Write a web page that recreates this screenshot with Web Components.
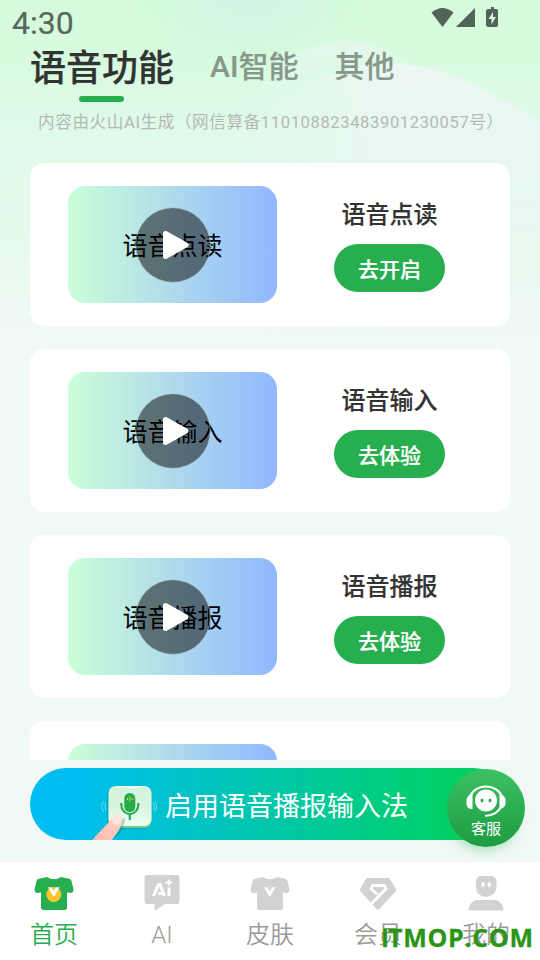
<!DOCTYPE html>
<html lang="zh-CN">
<head>
<meta charset="utf-8">
<title>语音功能</title>
<style>
html,body{margin:0;padding:0}
body{width:540px;height:960px;overflow:hidden;font-family:Roboto,"Noto Sans CJK SC",sans-serif}
</style>
</head>
<body>
<voice-app></voice-app>
<script>
const define = (name, html) => {
  const tpl = document.createElement('template');
  tpl.innerHTML = html;
  customElements.define(name, class extends HTMLElement {
    constructor() {
      super();
      this.attachShadow({mode: 'open'}).appendChild(tpl.content.cloneNode(true));
    }
  });
};

define('page-backdrop', `
<style>:host{display:block;position:absolute;inset:0}svg{display:block}</style>
<svg width="540" height="960" viewBox="0 0 540 960">
  <defs>
    <linearGradient id="b" x1="0" y1="0" x2="0" y2="1"><stop offset="0" stop-color="#d4fbda"/><stop offset=".06" stop-color="#d7fbdf"/><stop offset=".15" stop-color="#e1faeb"/><stop offset=".24" stop-color="#e5f9eb"/><stop offset=".34" stop-color="#f0f9f5"/><stop offset="1" stop-color="#f0f9f5"/></linearGradient>
    <linearGradient id="w" x1="0" y1="0" x2="0" y2="1"><stop offset="0" stop-color="#f0f6f5" stop-opacity=".8"/><stop offset=".4" stop-color="#e8f6f3" stop-opacity=".8"/><stop offset="1" stop-color="#eef8f5" stop-opacity="0"/></linearGradient>
    <linearGradient id="m" x1="0" y1="0" x2="0" y2="1"><stop offset="0" stop-color="#e6f7ef" stop-opacity=".8"/><stop offset="1" stop-color="#def9ec" stop-opacity="0"/></linearGradient>
    <radialGradient id="t" cx="250" cy="-5" r="150" gradientUnits="userSpaceOnUse" gradientTransform="translate(0 0) scale(1 .6)"><stop offset="0" stop-color="#d1f3e6"/><stop offset="1" stop-color="#d4fbdf" stop-opacity="0"/></radialGradient>
    <linearGradient id="f" x1="0" y1="0" x2="1" y2="0"><stop offset="0" stop-color="#fff" stop-opacity="0"/><stop offset=".55" stop-color="#fff"/></linearGradient>
    <mask id="k"><rect x="220" y="50" width="320" height="290" fill="url(#f)"/></mask>
  </defs>
  <rect width="540" height="960" fill="url(#b)"/>
  <rect width="540" height="130" fill="url(#t)"/>
  <path d="M232 120C270 70 300 41 345 41C375 41 395 54 412 66L440 130Z" fill="url(#m)"/>
  <path d="M220 160C290 80 350 58 412 65C460 70 500 98 540 122V340H220Z" fill="url(#w)" mask="url(#k)"/>
</svg>`);

define('status-bar', `
<style>:host{display:flex;justify-content:space-between;height:45px;padding:0 40px 0 12px;color:#58675c}
span{font-size:32px;line-height:47px;-webkit-text-stroke:.2px #58675c}svg{display:block}</style>
<span>4:30</span>
<svg width="70" height="30" viewBox="0 0 70 30" fill="#52645a"><path d="M1.500 12.500Q12.500 3.500 23.500 12.500L12.500 27Z"/><path d="M45 8V27H26Z"/><path d="M59 7H62V9H64.500Q66 9 66 11V25Q66 27 64 27H56.500Q54 27 54 25V11Q54 9 56.500 9H59Z" transform="translate(2 0)"/><path d="M63 12L58.500 19H61.500V24.500L66 17H63Z" fill="#d6fadd"/></svg>`);

define('tab-item', `
<style>:host{display:flex;flex-direction:column;align-items:center;font-size:30px;font-weight:500;color:#87988b;-webkit-text-stroke:.15px currentColor;line-height:43px}
:host([active]){font-size:36px;line-height:49px;color:#313332;-webkit-text-stroke-width:.25px}
i{display:none;width:45px;height:6px;border-radius:3px;background:#27ae4f;margin:2px 2px 0 0}
:host([active]) i{display:block}</style><slot></slot><i></i>`);

define('tab-bar', `
<style>:host{display:flex;align-items:flex-start;gap:36px;height:59px;padding-left:30px}</style><slot></slot>`);

define('notice-line', `
<style>:host{display:block;height:59px;padding-left:38px;font-size:16.6px;letter-spacing:.6px;line-height:38px;color:#b5b9b6;white-space:nowrap}</style><slot></slot>`);

define('play-thumb', `
<style>:host{display:grid;place-items:center;width:209px;height:117px;border-radius:17px;background:linear-gradient(90deg,#caffd9 0,#b9e6e5 34%,#a5cff2 66%,#91b7ff 100%);font-size:25px;color:#000}
span,svg{grid-area:1/1}span{margin-bottom:2px}svg{margin-top:1px}</style>
<span><slot></slot></span>
<svg width="76" height="76" viewBox="0 0 76 76"><circle cx="38" cy="38" r="37.300" fill="#000" fill-opacity=".5" stroke="#b8cdd2" stroke-width=".6"/><path d="M30.500 26.500L51 38L30.500 49.500Z" fill="#fff" stroke="#fff" stroke-width="5" stroke-linejoin="round"/></svg>`);

define('pill-button', `
<style>:host{display:flex;align-items:center;justify-content:center;box-sizing:border-box;width:111px;height:48px;padding-bottom:1px;border-radius:24px;background:#27ae4f;color:#fff;font-size:21px;font-weight:500;-webkit-text-stroke:.2px #fff}</style><slot></slot>`);

define('feature-card', `
<style>:host{display:flex;box-sizing:border-box;flex:none;height:163px;padding:23px 65px 23px 38px;border-radius:14px;background:#fff;justify-content:space-between}
.side{display:flex;flex-direction:column;align-items:center;padding-top:10px}
.title{font-size:24px;line-height:38px;height:48px;font-weight:500;-webkit-text-stroke:.15px #333;color:#333}</style>
<play-thumb><slot name="thumb"></slot></play-thumb>
<div class="side"><div class="title"><slot name="title"></slot></div><pill-button><slot name="action"></slot></pill-button></div>`);

define('feature-list', `
<style>:host{display:flex;flex-direction:column;gap:23px;height:597px;padding:0 30px;overflow:hidden}</style><slot></slot>`);

define('mic-art', `
<style>:host{display:block}svg{display:block}</style>
<svg width="64" height="72" viewBox="0 0 64 72">
  <defs><linearGradient id="k" x1="0" y1="0" x2="0" y2="1"><stop offset="0" stop-color="#d3f4de"/><stop offset=".5" stop-color="#d5f5de"/><stop offset="1" stop-color="#f1fff4"/></linearGradient>
  <linearGradient id="s" x1="0" y1="1" x2="1" y2="0"><stop offset="0" stop-color="#ffb9ac"/><stop offset="1" stop-color="#ffd8ce"/></linearGradient></defs>
  <rect x="14" y="20" width="44" height="41" rx="8" fill="#047e91" opacity=".45"/>
  <rect x="15.500" y="20" width="43" height="40" rx="7" fill="#71cf93"/>
  <rect x="15.500" y="18" width="43" height="40" rx="7" fill="url(#k)"/>
  <path d="M22 18.300H51Q40 22 36 20Q31 20 22 18.300Z" fill="#fff" opacity=".75"/>
  <g transform="translate(.3 0)"><rect x="31" y="25" width="11" height="19" rx="5.500" fill="#28aa4d"/>
  <path d="M28 35V37A8.500 9 0 0 0 45 37V35M36.500 46V52" fill="none" stroke="#28a94b" stroke-width="2.100"/>
  <path d="M34.200 30V32M36.500 28.500V33.500M38.800 30V32" stroke="#c7df3e" stroke-width="1"/></g>
  <path d="M22 70Q31 63 32 52L31 49L23 62Z" fill="#22734f" opacity=".3"/>
  <path d="M-1 72L15 55C20 48 23 45 27 47C30 49 29 52 28 57C26 64 21 68 19 72Z" fill="url(#s)"/>
  <path d="M19 51Q23 45 27 47Q30 49 28 54Q26 58 21 56Z" fill="#ffe5df"/>
  <g fill="none" stroke="#9be4f0" stroke-width=".8" opacity=".9"><path d="M10.500 33Q7 38.500 10.500 44M13 34.500Q11 38.500 13 42.500M62 33Q65.500 38.500 62 44M60.500 34.500Q62 38.500 60.500 42.500"/></g>
</svg>`);

define('cta-bar', `
<style>:host{display:flex;height:72px;margin:8px 30px 22px;box-sizing:border-box;padding-left:63px;gap:8px;border-radius:36px;background:linear-gradient(90deg,#00bdf1 0,#00bdf1 9%,#00d064 89%);color:#fff;font-size:27px;line-height:78px;font-weight:400;overflow:hidden}</style>
<mic-art></mic-art><slot></slot>`);

define('service-button', `
<style>:host{position:absolute;left:447px;top:769px;width:78px;height:78px;border-radius:50%;background:linear-gradient(#3bc164,#1d9c40);box-shadow:-2px 8px 10px -3px rgba(60,180,100,.3);display:flex;flex-direction:column;align-items:center;color:#fff;font-size:15px;line-height:18px}
svg{display:block;margin-top:13px;margin-bottom:1px}</style>
<svg width="42" height="37" viewBox="0 0 42 37" fill="#fff">
<path d="M5 15A16.500 14 0 0 1 37 15" fill="none" stroke="#fff" stroke-width="2"/>
<path d="M7.500 11.500V27Q2.500 27.500 1.500 22.500V17Q3 12.500 7.500 11.500ZM34.500 11.500V27Q39.500 26.500 40.500 22V17Q39 12.500 34.500 11.500Z"/>
<circle cx="21" cy="18.500" r="11"/><path d="M36.500 24C34 29 29 33.500 21 33.700" fill="none" stroke="#fff" stroke-width="2" stroke-linecap="round"/>
<ellipse cx="17" cy="18.500" rx="1.400" ry="2" fill="#22ab4c"/><ellipse cx="25" cy="18.500" rx="1.400" ry="2" fill="#22ab4c"/></svg><slot></slot>`);

define('nav-item', `
<style>:host{display:flex;flex-direction:column;align-items:center;flex:1;color:#999b9a;font-size:24px;line-height:36px;font-weight:350;padding-top:12px}
:host([active]){color:#27ae4f}</style><slot name="icon"></slot><span><slot></slot></span>`);

define('bottom-nav', `
<style>:host{display:flex;height:98px;background:#fff}svg{display:block;margin-bottom:5px}</style>
<nav-item active><svg slot="icon" width="40" height="38" viewBox="0 0 40 38"><path d="M13 3Q20 7.500 27 3L36 5Q37 5.500 37.500 7L39.500 15.500Q39.500 18.500 37 19L33 18.500V33.500Q33 36 30.500 36H10Q7 36 7 33.500V18.500L3 19Q.5 18.500.5 15.500L2.500 7Q3 5.500 4 5Z" fill="#27ae4f"/><circle cx="19.800" cy="20.500" r="7.500" fill="#fec62d"/><path d="M14 13.200H17.500L19.800 17L22 13.200H25.500L20.500 22H19Z" fill="#fff"/></svg>首页</nav-item>
<nav-item><svg slot="icon" width="36" height="38" viewBox="0 0 36 38"><path d="M3 1H33Q35.500 1 35.500 4V27Q35.500 30 33 30H21L12 36Q10.500 37 10.500 35V30H3Q.5 30 .5 27V4Q.5 1 3 1Z" fill="#d0d3d1"/><path d="M9.500 22L14.500 10.500H16L20.500 22M14 19.500H19M25 13.500V22" fill="none" stroke="#fff" stroke-width="3"/><path d="M25 4.500L26.200 7.300L29.500 8.500L26.200 9.700L25 13L23.800 9.700L20.500 8.500L23.800 7.300Z" fill="#fff"/></svg>AI</nav-item>
<nav-item><svg slot="icon" width="40" height="38" viewBox="0 0 40 38"><path d="M13 3Q20 7.500 27 3L36 5Q37 5.500 37.500 7L39.500 15.500Q39.500 18.500 37 19L33 18.500V33.500Q33 36 30.500 36H10Q7 36 7 33.500V18.500L3 19Q.5 18.500.5 15.500L2.500 7Q3 5.500 4 5Z" fill="#d0d3d1"/><path d="M14 13.200H17.500L19.800 17.500L22 13.200H25.500L20.500 22H19Z" fill="#fff"/></svg>皮肤</nav-item>
<nav-item><svg slot="icon" width="38" height="38" viewBox="0 0 38 38"><path d="M8.500 4H29.500L31 5L37 15Q37.500 16.500 36.500 17.500L20.500 35Q19 36.500 17.500 35L1.500 17.500Q.5 16.500 1 15L7 5Z" fill="#d0d3d1"/><path d="M18.500 20.500L12 15L13.500 11.500H25.500L27 15L11 31" fill="none" stroke="#fff" stroke-width="2.800" stroke-linejoin="round"/></svg>会员</nav-item>
<nav-item><svg slot="icon" width="36" height="38" viewBox="0 0 36 38" fill="#d0d3d1"><path d="M12 2H24Q28.500 3 28.500 8V13Q28 22 18 23Q8 22 8 13V8Q8 3 12 2ZM8 26H28Q34 28 35.500 35Q35.500 36.500 34 36.500H2Q.5 36.500.5 35Q2 28 8 26Z"/><ellipse cx="15" cy="10.500" rx="1.700" ry="2.500" fill="#fff"/><ellipse cx="21.300" cy="10.500" rx="1.700" ry="2.500" fill="#fff"/></svg>我的</nav-item>`);

define('site-mark', `
<style>:host{position:absolute;left:381.500px;top:922px;font:700 25px/30px "Open Sans","Noto Sans",sans-serif;letter-spacing:.7px;-webkit-text-stroke:.3px #2a9414;color:#2a9414;white-space:nowrap}
::slotted(b){font-family:"Liberation Sans",sans-serif;letter-spacing:-.5px}</style><slot></slot>`);

define('voice-app', `
<style>:host{display:block;position:relative;width:540px;height:960px;overflow:hidden}
main{position:relative;display:flex;flex-direction:column;height:960px}</style>
<page-backdrop></page-backdrop>
<main>
<status-bar></status-bar>
<tab-bar><tab-item active>语音功能</tab-item><tab-item>AI智能</tab-item><tab-item>其他</tab-item></tab-bar>
<notice-line>内容由火山AI生成（网信算备110108823483901230057号）</notice-line>
<feature-list>
<feature-card><span slot="thumb">语音点读</span><span slot="title">语音点读</span><span slot="action">去开启</span></feature-card>
<feature-card><span slot="thumb">语音输入</span><span slot="title">语音输入</span><span slot="action">去体验</span></feature-card>
<feature-card><span slot="thumb">语音播报</span><span slot="title">语音播报</span><span slot="action">去体验</span></feature-card>
<feature-card></feature-card>
</feature-list>
<cta-bar>启用语音播报输入法</cta-bar>
<bottom-nav></bottom-nav>
</main>
<service-button>客服</service-button>
<site-mark><b>I</b>TMOP.COM</site-mark>`);
</script>
</body>
</html>
